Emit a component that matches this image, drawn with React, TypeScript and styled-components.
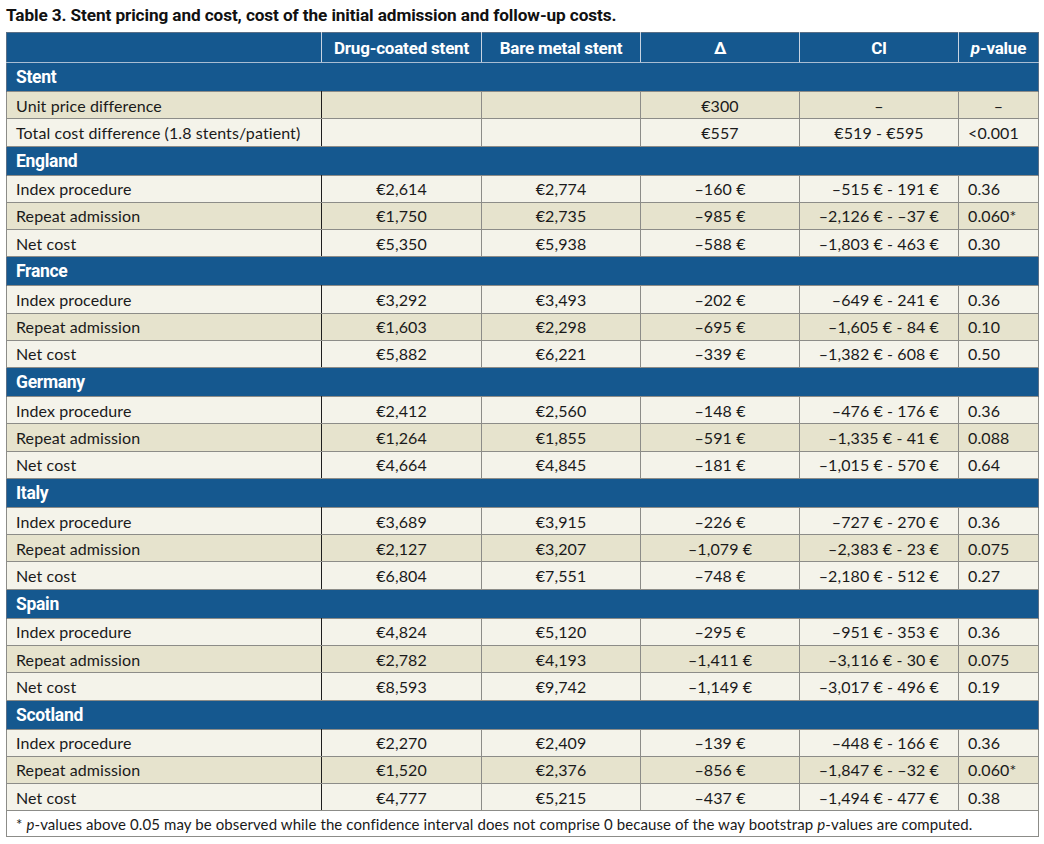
import React from 'react';
import styled, { createGlobalStyle } from 'styled-components';

const GlobalStyle = createGlobalStyle`
  html, body {
    margin: 0;
    padding: 0;
    background: #ffffff;
  }
`;

const Page = styled.div`
  padding: 4px 6px 0 6px;
  width: 1032px;
`;

const Caption = styled.h1`
  margin: 0;
  height: 28px;
  font-family: Roboto, "Liberation Sans", sans-serif;
  font-weight: bold;
  font-size: 17.2px;
  letter-spacing: -0.1px;
  line-height: 22px;
  color: #111;
`;

const Table = styled.table`
  width: 1032px;
  border-collapse: collapse;
  table-layout: fixed;
  font-family: Lato, "Liberation Sans", sans-serif;
  font-size: 16px;
  letter-spacing: 0.1px;
  color: #1a1a1a;
`;

const HeadCell = styled.th<{ $first?: boolean }>`
  height: 29px;
  padding: 0;
  background: #15588f;
  color: #ffffff;
  font-family: Roboto, "Liberation Sans", sans-serif;
  font-weight: bold;
  font-size: 17px;
  letter-spacing: -0.2px;
  text-align: center;
  border-top: 1px solid #5a6f86;
  border-bottom: 1px solid #a9bdd3;
  border-left: 1px solid ${({ $first }) => ($first ? '#5a6f86' : '#c8d4e2')};
  border-right: 1px solid #c8d4e2;

  &:last-child {
    border-right: 1px solid #5a6f86;
  }
`;

const SectionCell = styled.td`
  height: 28px;
  padding: 0 0 0 9px;
  background: #15588f;
  color: #ffffff;
  font-family: Roboto, "Liberation Sans", sans-serif;
  font-weight: bold;
  font-size: 17.5px;
  letter-spacing: -0.3px;
  border-left: 1px solid #5a6f86;
  border-right: 1px solid #5a6f86;
`;

const DataRow = styled.tr<{ $shade?: boolean }>`
  height: 27.28px;
  background: ${({ $shade }) => ($shade ? '#e6e3cd' : '#f4f3ea')};
`;

const Cell = styled.td<{ $align?: 'left' | 'center' | 'right'; $dark?: boolean }>`
  padding: 0 ${({ $align }) => ($align === 'right' ? '19px' : '0')} 0
    ${({ $align }) => ($align === 'left' ? '9px' : '0')};
  text-align: ${({ $align }) => $align || 'center'};
  border: 1px solid #8c8c88;
  border-right-color: ${({ $dark }) => ($dark ? '#1e1e1e' : '#8c8c88')};
  white-space: nowrap;
  overflow: hidden;
`;

const NoteCell = styled.td`
  height: 25px;
  padding: 0 0 0 9px;
  background: #ffffff;
  border: 1px solid #8c8c88;
  font-size: 15px;
`;

type Row = {
  label: string;
  dcs: string;
  bms: string;
  delta: string;
  ci: string;
  p: string;
  shade?: boolean;
  pCenter?: boolean;
  ciCenter?: boolean;
};

type Section = { name: string; rows: Row[] };

type Values = [string, string, string, string, string];

const country = (a: Values, b: Values, c: Values): Row[] => [
  { label: 'Index procedure', dcs: a[0], bms: a[1], delta: a[2], ci: a[3], p: a[4] },
  { label: 'Repeat admission', dcs: b[0], bms: b[1], delta: b[2], ci: b[3], p: b[4], shade: true },
  { label: 'Net cost', dcs: c[0], bms: c[1], delta: c[2], ci: c[3], p: c[4] },
];

const sections: Section[] = [
  {
    name: 'Stent',
    rows: [
      { label: 'Unit price difference', dcs: '', bms: '', delta: '€300', ci: '–', p: '–', shade: true, pCenter: true, ciCenter: true },
      { label: 'Total cost difference (1.8 stents/patient)', dcs: '', bms: '', delta: '€557', ci: '€519 - €595', p: '<0.001', ciCenter: true },
    ],
  },
  {
    name: 'England',
    rows: country(
      ['€2,614', '€2,774', '–160 €', '–515 € - 191 €', '0.36'],
      ['€1,750', '€2,735', '–985 €', '–2,126 € - –37 €', '0.060*'],
      ['€5,350', '€5,938', '–588 €', '–1,803 € - 463 €', '0.30']
    ),
  },
  {
    name: 'France',
    rows: country(
      ['€3,292', '€3,493', '–202 €', '–649 € - 241 €', '0.36'],
      ['€1,603', '€2,298', '–695 €', '–1,605 € - 84 €', '0.10'],
      ['€5,882', '€6,221', '–339 €', '–1,382 € - 608 €', '0.50']
    ),
  },
  {
    name: 'Germany',
    rows: country(
      ['€2,412', '€2,560', '–148 €', '–476 € - 176 €', '0.36'],
      ['€1,264', '€1,855', '–591 €', '–1,335 € - 41 €', '0.088'],
      ['€4,664', '€4,845', '–181 €', '–1,015 € - 570 €', '0.64']
    ),
  },
  {
    name: 'Italy',
    rows: country(
      ['€3,689', '€3,915', '–226 €', '–727 € - 270 €', '0.36'],
      ['€2,127', '€3,207', '–1,079 €', '–2,383 € - 23 €', '0.075'],
      ['€6,804', '€7,551', '–748 €', '–2,180 € - 512 €', '0.27']
    ),
  },
  {
    name: 'Spain',
    rows: country(
      ['€4,824', '€5,120', '–295 €', '–951 € - 353 €', '0.36'],
      ['€2,782', '€4,193', '–1,411 €', '–3,116 € - 30 €', '0.075'],
      ['€8,593', '€9,742', '–1,149 €', '–3,017 € - 496 €', '0.19']
    ),
  },
  {
    name: 'Scotland',
    rows: country(
      ['€2,270', '€2,409', '–139 €', '–448 € - 166 €', '0.36'],
      ['€1,520', '€2,376', '–856 €', '–1,847 € - –32 €', '0.060*'],
      ['€4,777', '€5,215', '–437 €', '–1,494 € - 477 €', '0.38']
    ),
  },
];

const App: React.FC = () => (
  <Page>
    <GlobalStyle />
    <Caption>Table 3. Stent pricing and cost, cost of the initial admission and follow-up costs.</Caption>
    <Table>
      <colgroup>
        <col style={{ width: 315 }} />
        <col style={{ width: 160 }} />
        <col style={{ width: 159 }} />
        <col style={{ width: 159 }} />
        <col style={{ width: 159 }} />
        <col style={{ width: 80 }} />
      </colgroup>
      <thead>
        <tr>
          <HeadCell $first />
          <HeadCell>Drug-coated stent</HeadCell>
          <HeadCell>Bare metal stent</HeadCell>
          <HeadCell>Δ</HeadCell>
          <HeadCell>CI</HeadCell>
          <HeadCell>
            <i>p</i>-value
          </HeadCell>
        </tr>
      </thead>
      <tbody>
        {sections.map(section => (
          <React.Fragment key={section.name}>
            <tr>
              <SectionCell colSpan={6}>{section.name}</SectionCell>
            </tr>
            {section.rows.map(row => (
              <DataRow key={section.name + row.label} $shade={row.shade}>
                <Cell $align="left" $dark>{row.label}</Cell>
                <Cell>{row.dcs}</Cell>
                <Cell>{row.bms}</Cell>
                <Cell>{row.delta}</Cell>
                <Cell $align={row.ciCenter ? 'center' : 'right'}>{row.ci}</Cell>
                <Cell $align={row.pCenter ? 'center' : 'left'}>{row.p}</Cell>
              </DataRow>
            ))}
          </React.Fragment>
        ))}
        <tr>
          <NoteCell colSpan={6}>
            * <i>p</i>-values above 0.05 may be observed while the confidence interval does not comprise 0 because
            of the way bootstrap <i>p</i>-values are computed.
          </NoteCell>
        </tr>
      </tbody>
    </Table>
  </Page>
);

export default App;
